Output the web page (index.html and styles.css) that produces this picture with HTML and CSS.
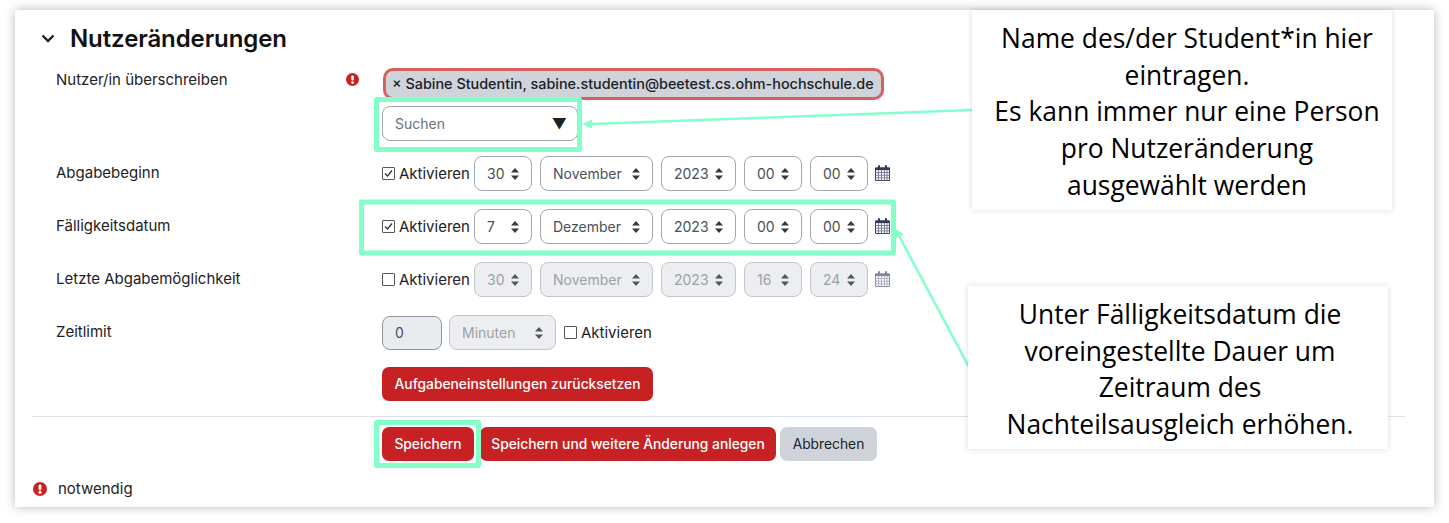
FILE: index.html
```html
<!DOCTYPE html>
<html lang="de">
<head>
<meta charset="utf-8">
<title>Nutzeränderungen</title>
<link rel="stylesheet" href="styles.css">
</head>
<body>
<svg class="defs" width="0" height="0" aria-hidden="true">
  <symbol id="cal" viewBox="0 0 15 16">
    <path d="M0.5 3h14v12.5h-14z" fill="#fff" stroke="#3a4257"/>
    <path d="M0.5 2.5h14v2.6h-14z" fill="#2f3a55"/>
    <path d="M3 0.3h2v4H3zM10 0.3h2v4h-2z" fill="#2f3a55"/>
    <path d="M0.5 7.5h14M0.5 10.2h14M0.5 12.9h14M3.5 5v10.5M6.5 5v10.5M9.5 5v10.5M12 5v10.5" stroke="#7b7f98" stroke-width="1" fill="none"/>
  </symbol>
  <symbol id="req" viewBox="0 0 14 14">
    <circle cx="7" cy="7" r="7" fill="#c82124"/>
    <rect x="5.6" y="2.6" width="2.8" height="5.6" rx="1.2" fill="#fff"/>
    <circle cx="7" cy="10.3" r="1.5" fill="#fff"/>
  </symbol>
</svg>

<main class="card">
  <h2 class="section-head">
    <svg class="chevron" viewBox="0 0 14 9" width="14" height="9"><path d="M1.5 1.5 7 7l5.5-5.5" fill="none" stroke="#1d2125" stroke-width="2.4"/></svg>
    Nutzeränderungen
  </h2>

  <div class="row row-user">
    <div class="label">Nutzer/in überschreiben</div>
    <div class="req-cell"><svg class="req" width="13" height="13"><use href="#req"/></svg></div>
    <div class="stack">
      <div class="chip">× Sabine Studentin, sabine.studentin@beetest.cs.ohm-hochschule.de</div>
      <div class="search"><span>Suchen</span><span class="tri">▼</span></div>
    </div>
  </div>

  <div class="row row-first">
    <div class="label">Abgabebeginn</div>
    <div class="req-cell"></div>
    <div class="controls">
      <label class="check"><input type="checkbox" checked> Aktivieren</label>
      <select class="sel w-d"><option>30</option></select>
      <select class="sel w-m"><option>November</option></select>
      <select class="sel w-y"><option>2023</option></select>
      <select class="sel w-h"><option>00</option></select>
      <select class="sel w-h"><option>00</option></select>
      <svg class="cal" width="15" height="16"><use href="#cal"/></svg>
    </div>
  </div>

  <div class="row">
    <div class="label">Fälligkeitsdatum</div>
    <div class="req-cell"></div>
    <div class="controls">
      <label class="check"><input type="checkbox" checked> Aktivieren</label>
      <select class="sel w-d"><option>7</option></select>
      <select class="sel w-m"><option>Dezember</option></select>
      <select class="sel w-y"><option>2023</option></select>
      <select class="sel w-h"><option>00</option></select>
      <select class="sel w-h"><option>00</option></select>
      <svg class="cal" width="15" height="16"><use href="#cal"/></svg>
    </div>
  </div>

  <div class="row">
    <div class="label">Letzte Abgabemöglichkeit</div>
    <div class="req-cell"></div>
    <div class="controls">
      <label class="check"><input type="checkbox"> Aktivieren</label>
      <select class="sel w-d" disabled><option>30</option></select>
      <select class="sel w-m" disabled><option>November</option></select>
      <select class="sel w-y" disabled><option>2023</option></select>
      <select class="sel w-h" disabled><option>16</option></select>
      <select class="sel w-h" disabled><option>24</option></select>
      <svg class="cal off" width="15" height="16"><use href="#cal"/></svg>
    </div>
  </div>

  <div class="row">
    <div class="label">Zeitlimit</div>
    <div class="req-cell"></div>
    <div class="controls">
      <div class="num">0</div>
      <select class="sel w-u" disabled><option>Minuten</option></select>
      <label class="check"><input type="checkbox"> Aktivieren</label>
    </div>
  </div>

  <div class="row row-reset">
    <div></div><div></div>
    <div class="controls"><button class="btn red b-reset">Aufgabeneinstellungen zurücksetzen</button></div>
  </div>

  <hr class="rule">

  <div class="row row-actions">
    <div></div><div></div>
    <div class="controls actions">
      <button class="btn red b-save">Speichern</button>
      <button class="btn red b-more">Speichern und weitere Änderung anlegen</button>
      <button class="btn grey">Abbrechen</button>
    </div>
  </div>

  <div class="required-note">
    <svg width="14" height="14"><use href="#req"/></svg>
    <span>notwendig</span>
  </div>
</main>

<svg class="marks" width="1449" height="523" viewBox="0 0 1449 523" aria-hidden="true">
  <g fill="none" stroke="#85ffc9" stroke-width="5" stroke-linejoin="round">
    <rect x="376.5" y="99.5" width="203" height="50"/>
    <rect x="361.5" y="202" width="532" height="51"/>
    <rect x="376.5" y="422.5" width="102" height="43"/>
  </g>
  <g fill="none" stroke="#85ffc9" stroke-width="2.5">
    <path d="M973 110 590 124"/>
    <path d="M969 367 898 234"/>
  </g>
  <g fill="#85ffc9">
    <path d="M582 124.3 592 119.5 592.4 128.5z"/>
    <path d="M895 228 903.5 234.5 895.5 238.5z"/>
  </g>
</svg>

<aside class="note note-one">Name des/der Student*in hier<br>eintragen.<br>Es kann immer nur eine Person<br>pro Nutzeränderung<br>ausgewählt werden</aside>
<aside class="note note-two">Unter Fälligkeitsdatum die<br>voreingestellte Dauer um<br>Zeitraum des<br>Nachteilsausgleich erhöhen.</aside>
</body>
</html>
```

FILE: styles.css
```css
* { box-sizing: border-box; }

html, body { margin: 0; height: 523px; overflow: hidden; background: #fff; }

body {
  position: relative;
  font-family: "Inter", "Liberation Sans", sans-serif;
  font-size: 15px;
  color: #1d2125;
}

.defs { position: absolute; }

.card {
  width: 1419px;
  height: 497px;
  margin: 10px 0 0 15px;
  padding: 9px 29px 0 17px;
  background: #fff;
  box-shadow: 0 0 10px rgba(0, 0, 0, .28);
}

.section-head {
  display: flex;
  align-items: center;
  gap: 15px;
  height: 38px;
  margin: 0 0 0 9px;
  font-size: 24px;
  font-weight: 600;
  letter-spacing: -.1px;
  color: #111;
}

.chevron { flex: none; }

.row {
  display: grid;
  grid-template-columns: 288px 38px 1fr;
  padding-left: 24px;
  margin-top: 18px;
  min-height: 35px;
}

.row-user { margin-top: 11px; }
.row-first { margin-top: 15px; }
.row-reset { margin-top: 17px; min-height: 34px; }
.row-actions { margin-top: 9px; }

.label { padding-top: 7px; line-height: 20px; color: #1d2125; }
.row-user .label { padding-top: 2px; }

.req-cell { padding: 5px 0 0 2px; }
.req { display: block; }

.stack { display: flex; flex-direction: column; gap: 6px; }

.chip {
  width: 501px;
  height: 32px;
  margin-left: 1px;
  padding: 0 6px 0 6px;
  border: 3px solid #d9605f;
  border-radius: 10px;
  background: #ced4da;
  font-size: 14.4px;
  font-weight: 500;
  line-height: 26px;
  white-space: nowrap;
}

.search {
  display: flex;
  justify-content: space-between;
  align-items: center;
  width: 196px;
  height: 35px;
  padding: 0 10px 0 12px;
  border: 1px solid #a0a6ae;
  border-radius: 8px;
  font-size: 14px;
  color: #6a737b;
}

.tri { font-size: 15px; color: #1d2125; }

.controls { display: flex; align-items: center; gap: 8px; }

.check { display: flex; align-items: center; gap: 4px; width: 88px; margin-right: -4px; white-space: nowrap; }
.check input {
  appearance: none;
  flex: none;
  width: 13px;
  height: 13px;
  margin: 0;
  border: 1px solid #555;
  border-radius: 1px;
  background: #fff center / 11px 11px no-repeat;
}
.check input:checked {
  background-image: url("data:image/svg+xml,%3Csvg xmlns='http://www.w3.org/2000/svg' viewBox='0 0 11 11'%3E%3Cpath d='M2 5.5 4.5 8 9 2.5' fill='none' stroke='%23333' stroke-width='1.3'/%3E%3C/svg%3E");
}

.sel {
  appearance: none;
  height: 35px;
  padding: 0 24px 0 12px;
  border: 1px solid #a0a6ae;
  border-radius: 8px;
  font: inherit;
  font-size: 14px;
  color: #495057;
  background: #fff url("data:image/svg+xml,%3Csvg xmlns='http://www.w3.org/2000/svg' viewBox='0 0 8 12'%3E%3Cpath d='M4 0 8 4.6H0zM4 12 0 7.4h8z' fill='%23343a40'/%3E%3C/svg%3E") no-repeat right 12px center / 8px 12px;
}
.sel:disabled { background-color: #e9ecef; border-color: #b8bdc3; color: #8b9197; opacity: .85; }

.w-d { width: 58px; }
.w-m { width: 113px; }
.w-y { width: 75px; }
.w-h { width: 58px; }
.w-u { width: 107px; }

.cal { flex: none; margin: -1px 0 0 -1px; }
.cal.off { opacity: .6; }

.num {
  width: 60px;
  height: 34px;
  margin-right: -1px;
  padding: 0 12px;
  border: 1px solid #8f959e;
  border-radius: 8px;
  background: #e9ecef;
  font-size: 14px;
  line-height: 32px;
  color: #495057;
}

.btn {
  height: 34px;
  padding: 0;
  border: 0;
  border-radius: 7px;
  font: inherit;
  font-size: 13.8px;
  font-weight: 500;
  white-space: nowrap;
}
.red { background: #c82124; color: #fff; }
.grey { width: 97px; margin-left: -1px; background: #ced4da; color: #1d2125; font-weight: 400; }

.rule { margin: 15px 0 0; border: 0; border-top: 1px solid #dee2e6; }

.actions { gap: 5px; }
.b-reset { width: 271px; }
.b-save { width: 92px; }
.b-more { width: 296px; margin-left: 1px; }

.required-note {
  display: flex;
  align-items: center;
  gap: 11px;
  margin: 18px 0 0 1px;
  line-height: 20px;
}

.marks { position: absolute; left: 0; top: 0; pointer-events: none; }

.note {
  position: absolute;
  background: #fff;
  box-shadow: 0 0 6px rgba(0, 0, 0, .14);
  font-family: "Open Sans", "Noto Sans", sans-serif;
  font-size: 26.4px;
  line-height: 36.7px;
  text-align: center;
  white-space: nowrap;
  color: #000;
}

.note-one { left: 972px; top: 10px; width: 420px; height: 200px; padding: 10px 0 0 10px; }
.note-two { left: 968px; top: 286px; width: 420px; height: 163px; padding: 10px 0 0 4px; }
```
